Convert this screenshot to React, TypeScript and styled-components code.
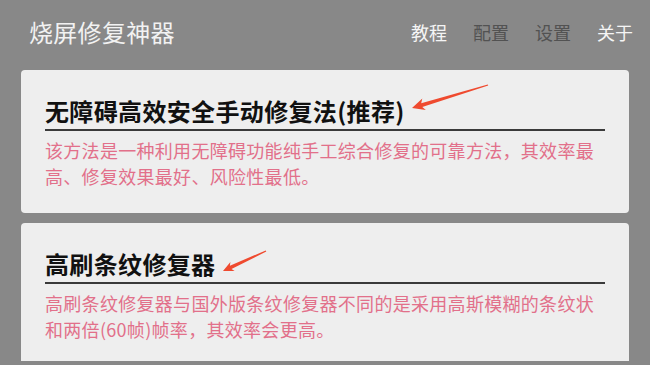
import React from 'react';
import styled, { createGlobalStyle } from 'styled-components';

const GlobalStyle = createGlobalStyle`
  html, body {
    margin: 0;
    padding: 0;
    background-color: #888888;
  }
  body {
    font-family: "Noto Sans CJK SC", "Noto Sans", sans-serif;
  }
`;

const Page = styled.div`
  width: 650px;
  height: 365px;
  display: flex;
  flex-direction: column;
  background-color: #888888;
  overflow: hidden;
`;

const Header = styled.header`
  height: 64px;
  flex-shrink: 0;
  display: flex;
  align-items: center;
  justify-content: space-between;
  padding: 0 17px 0 29px;
`;

const AppTitle = styled.h1`
  margin: 0;
  font-size: 24px;
  font-weight: 400;
  line-height: 30px;
  letter-spacing: 0.3px;
  color: #f2f2f2;
`;

const Nav = styled.nav`
  display: flex;
  gap: 26px;
`;

const NavItem = styled.span<{ $dim?: boolean }>`
  font-size: 18px;
  line-height: 24px;
  color: ${(p) => (p.$dim ? '#525252' : '#f5f5f5')};
`;

const List = styled.main`
  height: 291px;
  overflow: hidden;
  padding: 6px 21px 0 21px;
  display: flex;
  flex-direction: column;
  gap: 10px;
`;

const Card = styled.section`
  flex-shrink: 0;
  background-color: #eeeeee;
  border-radius: 4px;
  padding: 26px 24px 24px 24px;
`;

const CardTitle = styled.h2`
  margin: 0;
  padding-bottom: 3px;
  border-bottom: 2px solid #3a3a3a;
  font-size: 24px;
  font-weight: 700;
  line-height: 30px;
  letter-spacing: 0.35px;
  color: #111111;
`;

const TitleText = styled.span`
  position: relative;
  display: inline-block;
`;

const ArrowMark = styled.svg`
  position: absolute;
  overflow: visible;
`;

const Desc = styled.p`
  margin: 6px 0 0 0;
  font-size: 18px;
  line-height: 26px;
  letter-spacing: 0.3px;
  color: #e2708a;
`;

type Pt = [number, number];

interface ArrowProps {
  left: number;
  top: number;
  w: number;
  h: number;
  tip: Pt;
  tail: Pt;
  head: number;
  barb: number;
}

// hand-drawn style annotation arrow, shaft tapers towards the tail
const Arrow: React.FC<ArrowProps> = ({ left, top, w, h, tip, tail, head, barb }) => {
  const dx = tail[0] - tip[0];
  const dy = tail[1] - tip[1];
  const len = Math.hypot(dx, dy);
  const u: Pt = [dx / len, dy / len];
  const n: Pt = [-u[1], u[0]];
  const at = (base: Pt, a: number, b: number): Pt => [
    base[0] + u[0] * a + n[0] * b,
    base[1] + u[1] * a + n[1] * b,
  ];
  const pts = [
    tip,
    at(tip, head * 1.05, -barb),
    at(tip, head * 0.85, -1.9),
    at(tail, 0, -0.6),
    at(tail, 0, 0.6),
    at(tip, head * 0.85, 1.9),
    at(tip, head * 1.05, barb),
  ]
    .map((p) => `${p[0].toFixed(1)},${p[1].toFixed(1)}`)
    .join(' ');

  return (
    <ArrowMark style={{ left, top }} width={w} height={h} viewBox={`0 0 ${w} ${h}`}>
      <polygon points={pts} fill="#ef4a2f" />
    </ArrowMark>
  );
};

export default function App() {
  return (
    <>
      <GlobalStyle />
      <Page>
        <Header>
          <AppTitle>烧屏修复神器</AppTitle>
          <Nav>
            <NavItem>教程</NavItem>
            <NavItem $dim>配置</NavItem>
            <NavItem $dim>设置</NavItem>
            <NavItem>关于</NavItem>
          </Nav>
        </Header>
        <List>
          <Card>
            <CardTitle>
              <TitleText>
                无障碍高效安全手动修复法(推荐)
                <Arrow
                  left={365}
                  top={-13}
                  w={80}
                  h={30}
                  tip={[2, 25]}
                  tail={[78, 2]}
                  head={12}
                  barb={6}
                />
              </TitleText>
            </CardTitle>
            <Desc>
              该方法是一种利用无障碍功能纯手工综合修复的可靠方法，其效率最高、修复效果最好、风险性最低。
            </Desc>
          </Card>
          <Card>
            <CardTitle>
              <TitleText>
                高刷条纹修复器
                <Arrow
                  left={176}
                  top={0}
                  w={48}
                  h={25}
                  tip={[2, 22]}
                  tail={[45, 2]}
                  head={10}
                  barb={5}
                />
              </TitleText>
            </CardTitle>
            <Desc>
              高刷条纹修复器与国外版条纹修复器不同的是采用高斯模糊的条纹状和两倍(60帧)帧率，其效率会更高。
            </Desc>
          </Card>
        </List>
      </Page>
    </>
  );
}
